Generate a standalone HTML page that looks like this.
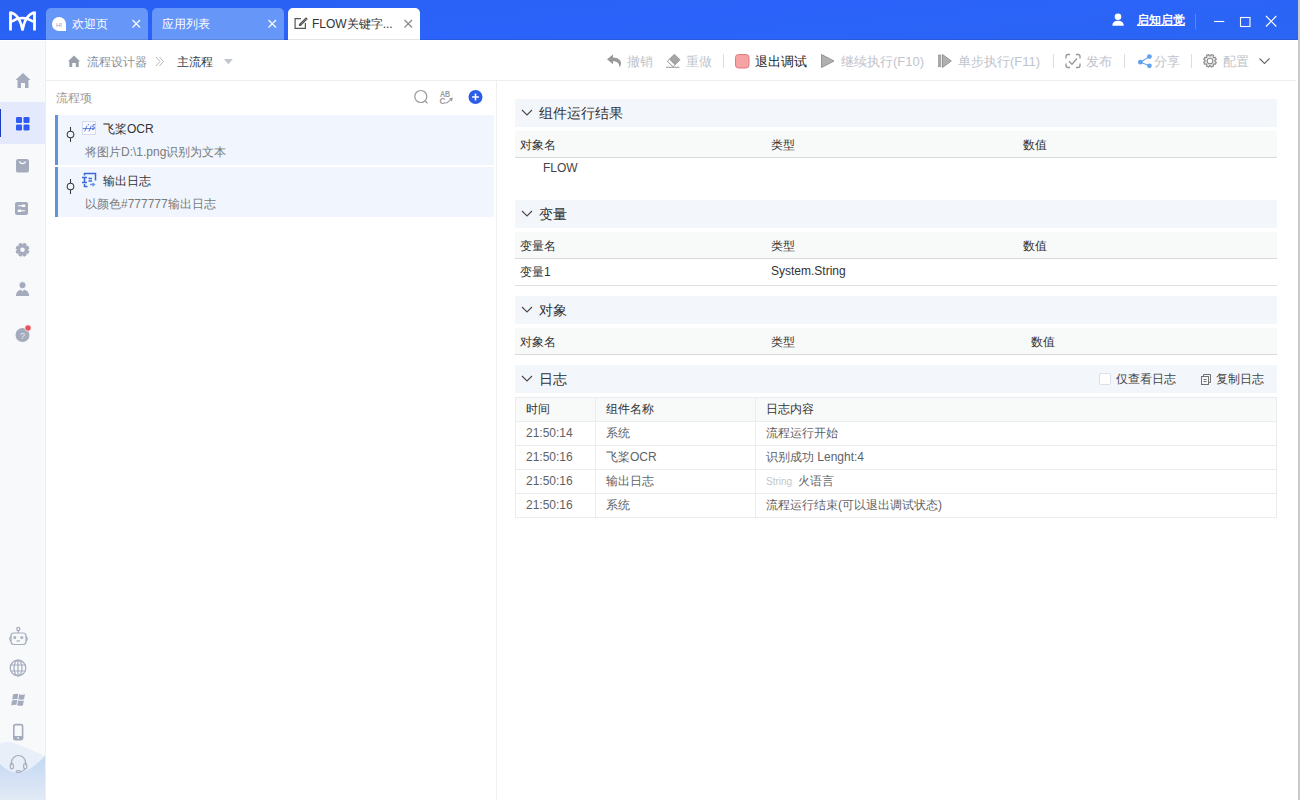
<!DOCTYPE html>
<html><head><meta charset="utf-8">
<style>
*{box-sizing:border-box;margin:0;padding:0}
html,body{width:1300px;height:800px;overflow:hidden;background:#fff;font-family:"Liberation Sans",sans-serif;font-size:12px;color:#333}
.a{position:absolute}
.t{position:absolute;white-space:nowrap;line-height:1}
#hdr{left:0;top:0;width:1298px;height:40px;background:linear-gradient(175deg,#2960f2 0%,#2b63fa 50%,#2a65f3 100%)}
#hdrb{left:0;top:39px;width:1298px;height:1px;background:rgba(30,30,30,0.12)}
.tab{position:absolute;top:8px;height:32px;border-radius:5px 5px 0 0;background:#6596f8}
.tab.act{background:#fff}
#side{left:0;top:41px;width:46px;height:759px;background:#f8f9fb;border-right:1px solid #edefee}
#rb{left:1298px;top:0;width:2px;height:800px;background:#c7cacd}
#rb2{display:none}
#tb{left:46px;top:80px;width:1250px;height:1px;background:#eeeeee}
#div{left:496px;top:81px;width:1px;height:719px;background:#efefef}
.item{position:absolute;left:55px;width:439px;height:50px;background:#f1f6fe;border-left:3px solid #5f93d9}
.sec{position:absolute;left:515px;width:762px;height:28px;background:#f3f6fa}
.th{position:absolute;left:515px;width:762px;height:27px;background:#f8f9f9;border-bottom:1px solid #d8d9db}
.hl{position:absolute;height:1px;background:#eaecf0}
.vl{position:absolute;width:1px;background:#eaecf0}
.tbt{font-size:13px;color:#c0c4cc;top:55px}
.lr{color:#5f6368}
</style></head><body>
<div id="hdr" class="a"></div>
<!-- tabs -->
<div class="tab" style="left:46px;width:102px"></div>
<div class="tab" style="left:152px;width:132px"></div>
<div class="tab act" style="left:288px;width:132px"></div>
<div class="t" style="left:72px;top:18px;color:#fff">欢迎页</div>
<div class="t" style="left:162px;top:18px;color:#fff">应用列表</div>
<div class="t" style="left:312px;top:18px;color:#333">FLOW关键字...</div>
<div class="t" style="left:1137px;top:14px;color:#fff;font-weight:bold;text-decoration:underline;text-underline-offset:1px">启知启觉</div>

<div id="side" class="a"></div>
<div id="hdrb" class="a"></div>
<div id="tb" class="a"></div>
<div id="rb" class="a"></div>
<div id="rb2" class="a"></div>
<div id="div" class="a"></div>
<div class="a" style="left:0;top:102px;width:45px;height:42px;background:#e4eafb"></div>
<div class="a" style="left:0;top:109px;width:1px;height:28px;background:#1d3fbf"></div>

<!-- breadcrumb -->
<div class="t" style="left:87px;top:56px;color:#8a8f99">流程设计器</div>
<div class="t" style="left:177px;top:56px;color:#3a3d44">主流程</div>

<!-- toolbar -->
<div class="t tbt" style="left:627px">撤销</div>
<div class="t tbt" style="left:686px">重做</div>
<div class="t tbt" style="left:755px;color:#1f1f1f">退出调试</div>
<div class="t tbt" style="left:841px">继续执行(F10)</div>
<div class="t tbt" style="left:958px">单步执行(F11)</div>
<div class="t tbt" style="left:1086px">发布</div>
<div class="t tbt" style="left:1154px">分享</div>
<div class="t tbt" style="left:1223px">配置</div>

<!-- left panel -->
<div class="t" style="left:56px;top:92px;color:#9a9a9a">流程项</div>
<div class="item" style="top:115px"></div>
<div class="item" style="top:167px"></div>
<div class="t" style="left:103px;top:123px;color:#333">飞桨OCR</div>
<div class="t" style="left:85px;top:146px;color:#7a7a7a">将图片D:\1.png识别为文本</div>
<div class="t" style="left:103px;top:175px;color:#333">输出日志</div>
<div class="t" style="left:85px;top:198px;color:#7a7a7a">以颜色#777777输出日志</div>

<!-- right sections -->
<div class="sec" style="top:99px"></div>
<div class="t" style="left:539px;top:106px;font-size:14px">组件运行结果</div>
<div class="th" style="top:131px"></div>
<div class="t" style="left:520px;top:139px">对象名</div>
<div class="t" style="left:771px;top:139px">类型</div>
<div class="t" style="left:1023px;top:139px">数值</div>
<div class="t" style="left:543px;top:162px;color:#444">FLOW</div>

<div class="sec" style="top:200px"></div>
<div class="t" style="left:539px;top:207px;font-size:14px">变量</div>
<div class="th" style="top:232px"></div>
<div class="t" style="left:520px;top:240px">变量名</div>
<div class="t" style="left:771px;top:240px">类型</div>
<div class="t" style="left:1023px;top:240px">数值</div>
<div class="a" style="left:515px;top:285px;width:762px;height:1px;background:#dedfe1"></div>
<div class="t" style="left:520px;top:266px">变量1</div>
<div class="t" style="left:771px;top:265px">System.String</div>

<div class="sec" style="top:296px"></div>
<div class="t" style="left:539px;top:303px;font-size:14px">对象</div>
<div class="th" style="top:328px"></div>
<div class="t" style="left:520px;top:336px">对象名</div>
<div class="t" style="left:771px;top:336px">类型</div>
<div class="t" style="left:1031px;top:336px">数值</div>

<div class="sec" style="top:365px"></div>
<div class="t" style="left:539px;top:372px;font-size:14px">日志</div>
<div class="t" style="left:1116px;top:373px;color:#444">仅查看日志</div>
<div class="t" style="left:1216px;top:373px;color:#444">复制日志</div>
<div class="a" style="left:1099px;top:373px;width:12px;height:12px;border:1px solid #dcdfe6;border-radius:2px;background:#fff"></div>

<!-- log table -->
<div class="a" style="left:515px;top:397px;width:762px;height:121px;border:1px solid #eaecf0;background:#fff"></div>
<div class="a" style="left:516px;top:398px;width:760px;height:23px;background:#f8f9f9"></div>
<div class="hl" style="left:515px;top:421px;width:762px"></div>
<div class="hl" style="left:515px;top:445px;width:762px"></div>
<div class="hl" style="left:515px;top:469px;width:762px"></div>
<div class="hl" style="left:515px;top:493px;width:762px"></div>
<div class="vl" style="left:595px;top:397px;height:121px"></div>
<div class="vl" style="left:755px;top:397px;height:121px"></div>
<div class="t" style="left:526px;top:403px">时间</div>
<div class="t" style="left:606px;top:403px">组件名称</div>
<div class="t" style="left:766px;top:403px">日志内容</div>
<div class="t lr" style="left:526px;top:427px">21:50:14</div>
<div class="t lr" style="left:606px;top:427px">系统</div>
<div class="t lr" style="left:766px;top:427px">流程运行开始</div>
<div class="t lr" style="left:526px;top:451px">21:50:16</div>
<div class="t lr" style="left:606px;top:451px">飞桨OCR</div>
<div class="t lr" style="left:766px;top:451px">识别成功 Lenght:4</div>
<div class="t lr" style="left:526px;top:475px">21:50:16</div>
<div class="t lr" style="left:606px;top:475px">输出日志</div>
<div class="t" style="left:766px;top:477px;color:#c6c6c6;font-size:10px">String</div>
<div class="t lr" style="left:798px;top:475px">火语言</div>
<div class="t lr" style="left:526px;top:499px">21:50:16</div>
<div class="t lr" style="left:606px;top:499px">系统</div>
<div class="t lr" style="left:766px;top:499px">流程运行结束(可以退出调试状态)</div>

<!-- ICON OVERLAY -->
<svg class="a" style="left:0;top:0" width="1300" height="800" viewBox="0 0 1300 800">
<!-- logo -->
<g fill="none" stroke="#fff" stroke-width="3">
<path d="M10.5 11.5 V30.5 M34.5 11.5 V30.5" stroke-width="2.8"/>
<path d="M11 12.5 Q20 15 22.5 30.5 Q25 15 34 12.5" stroke-width="2.4"/>
<path d="M11.5 21.8 Q22 14.2 33.5 21.8" stroke-width="2.3"/>
</g>
<!-- HI bubble -->
<path d="M59 17 A7 7 0 1 0 59 31 H66 V24 A7 7 0 0 0 59 17 Z" fill="#fff"/>
<text x="59" y="26.5" font-size="6" fill="#8aa0d0" text-anchor="middle" font-family="Liberation Sans">HI</text>
<!-- tab closes -->
<g stroke="#fff" stroke-width="1.2" fill="none">
<path d="M132.5 20 L140 27.5 M140 20 L132.5 27.5"/>
<path d="M268.5 20 L276 27.5 M276 20 L268.5 27.5"/>
</g>
<path d="M404.5 20 L412 27.5 M412 20 L404.5 27.5" stroke="#888" stroke-width="1.2" fill="none"/>
<!-- edit icon -->
<g stroke="#555" stroke-width="1.2" fill="none">
<path d="M301 18.6 H295.1 V28.4 H305.4 V23"/>
<path d="M299.5 24.5 L306 18 L307 19 L300.5 25.5 H299.5 Z"/>
</g>
<!-- user -->
<circle cx="1118" cy="16.8" r="3.3" fill="#fff"/>
<path d="M1112.3 25.8 Q1112.5 20.8 1118 20.8 Q1123.5 20.8 1123.8 25.8 Z" fill="#fff"/>
<rect x="1195" y="14" width="1" height="15.5" fill="#5e86f3"/>
<!-- window controls -->
<g stroke="#fff" stroke-width="1.1" fill="none">
<path d="M1214 21.5 H1224.3"/>
<rect x="1240.5" y="17.5" width="9.5" height="9"/>
<path d="M1266 16 L1276.3 26.5 M1276.3 16 L1266 26.5"/>
</g>

<!-- sidebar icons -->
<g fill="#a3abbd">
<path d="M23 73 L30.5 80 H28.5 V88 H25 V83 H21 V88 H17.5 V80 H15.5 Z"/>
<rect x="16" y="159" width="13" height="13.6" rx="2.2"/>
<rect x="15" y="202" width="13" height="13" rx="2"/>
<path d="M22.89 244.82 L23.82 243.33 L26.14 244.30 L25.75 246.00 L26.30 246.55 L28.00 246.16 L28.97 248.48 L27.48 249.41 L27.48 250.19 L28.97 251.12 L28.00 253.44 L26.30 253.05 L25.75 253.60 L26.14 255.30 L23.82 256.27 L22.89 254.78 L22.11 254.78 L21.18 256.27 L18.86 255.30 L19.25 253.60 L18.70 253.05 L17.00 253.44 L16.03 251.12 L17.52 250.19 L17.52 249.41 L16.03 248.48 L17.00 246.16 L18.70 246.55 L19.25 246.00 L18.86 244.30 L21.18 243.33 L22.11 244.82Z" stroke="#a3abbd" stroke-width="1" stroke-linejoin="round"/>
<path d="M15.8 296 Q16.3 289.5 22.5 289.5 Q28.7 289.5 29.2 296 Z"/>
<circle cx="22.5" cy="285.2" r="3.6" stroke="#f8f9fb" stroke-width="1"/><path d="M20.6 289.3 L22.5 291.6 L24.4 289.3 Z" fill="#f8f9fb"/>
<circle cx="22.5" cy="335" r="7"/>
</g>
<g fill="#2f5bf0">
<rect x="16" y="117" width="6" height="6" rx="1.3"/>
<rect x="23.5" y="117" width="6" height="6" rx="1.3"/>
<rect x="16" y="124.5" width="6" height="6" rx="1.3"/>
<rect x="23.5" y="124.5" width="6" height="6" rx="1.3"/>
</g>
<path d="M19.2 161.6 Q22.5 165.6 25.8 161.6" stroke="#fff" stroke-width="1.1" fill="none"/>
<g fill="#fff"><rect x="18" y="205.3" width="7" height="1"/><rect x="21.8" y="204.6" width="3.4" height="2.4"/><rect x="18" y="210.3" width="7" height="1"/><rect x="17.8" y="209.6" width="3.4" height="2.4"/></g>
<circle cx="22.5" cy="249.8" r="2.3" fill="#f7f8fa"/>
<path d="M22.4 283.5 v2" stroke="none"/>
<text x="22.5" y="338.5" font-size="9" fill="#e8ecf4" text-anchor="middle" font-family="Liberation Sans">?</text>
<circle cx="28" cy="328" r="3.2" fill="#e9505a" stroke="#f7f8fa" stroke-width="0.8"/>

<!-- bottom wave -->
<path d="M0 743.5 Q8 740 20 745 Q35 752 45 756 V800 H0 Z" fill="#e9eff8"/>
<defs><linearGradient id="wg" x1="0" y1="0" x2="0" y2="1"><stop offset="0" stop-color="#c3d8f3"/><stop offset="1" stop-color="#e2eaf6"/></linearGradient></defs>
<path d="M0 764 Q9 773 18 773 Q30 772 45 756 V800 H0 Z" fill="url(#wg)"/>

<g fill="none" stroke="#a3abbd" stroke-width="1.2">
<!-- robot -->
<rect x="11" y="633" width="15" height="11.5" rx="3"/>
<circle cx="18.3" cy="629" r="1.6"/>
<path d="M18.3 630.6 V633"/>
<path d="M11 636.5 Q8.5 638.5 11 641 M26 636.5 Q28.5 638.5 26 641"/>
<circle cx="14.8" cy="637.5" r="1"/><circle cx="21.8" cy="637.5" r="1"/>
<path d="M16.5 641 H20"/>
<!-- globe -->
<circle cx="18" cy="668" r="7.8"/>
<ellipse cx="18" cy="668" rx="4" ry="7.8"/>
<path d="M18 660.2 V675.8 M10.5 665 H25.5 M10.5 671 H25.5"/>
<!-- phone -->
<rect x="13.8" y="724.6" width="8.8" height="15" rx="1.8" stroke-width="1.6"/>
<!-- headset -->
<path d="M11.5 765 V762.5 A7 7 0 0 1 25.5 762.5 V765"/>
<rect x="10.3" y="763.5" width="3" height="5.5" rx="1.4"/>
<rect x="23.7" y="763.5" width="3" height="5.5" rx="1.4"/>
<path d="M25 769 Q24 771 21 771.5"/>
<ellipse cx="18.3" cy="771.5" rx="2.3" ry="1" />
</g>
<rect x="13.8" y="736" width="8.8" height="3.6" fill="#a3abbd"/><circle cx="18.2" cy="737.9" r="0.9" fill="#f3f5f9"/>
<!-- windows -->
<g fill="#a3abbd">
<path d="M13 694.5 Q15.5 693.3 18.3 694 L17.4 699 Q14.8 698.6 12.2 699.5 Z"/>
<path d="M19.2 694.2 Q22 695.2 25 694.2 L24 699.3 Q21.2 700.2 18.3 699.3 Z"/>
<path d="M12 700.5 Q14.6 699.7 17.2 700.1 L16.3 705 Q13.6 704.5 11.2 705.5 Z"/>
<path d="M18.1 700.3 Q21 701.3 23.8 700.4 L22.9 705.5 Q20 706.3 17.2 705.3 Z"/>
</g>

<!-- breadcrumb -->
<path d="M74 55.5 L80 61.2 H78.7 V67 H75.8 V63 H72.2 V67 H69.3 V61.2 H68 Z" fill="#9aa0aa"/>
<path d="M156 57 L160 61.5 L156 66 M159.5 57 L163.5 61.5 L159.5 66" stroke="#b0b0b0" stroke-width="0.9" fill="none"/>
<path d="M224 59 H232.8 L228.4 64.2 Z" fill="#c0c4cc"/>

<!-- toolbar icons -->
<path d="M607 59.3 L613 54.5 V57.5 C618.5 57.5 621.5 60.5 621 64 C620.6 65.8 620 66.8 619.3 67.3 C619.6 63.8 617.5 61.3 613 61.3 V64.2 Z" fill="#999"/>
<path d="M674.4 54.2 L680 59.8 L675.1 64.7 L669.5 59.1 Z" fill="#a6a6a6" stroke="#8f8f8f" stroke-width="0.8" stroke-linejoin="round"/>
<path d="M669.5 59.1 L675.1 64.7 L673 66.8 L667.4 61.2 Z" fill="#fff" stroke="#8f8f8f" stroke-width="1" stroke-linejoin="round"/>
<path d="M666 67.3 H679.5" stroke="#999" stroke-width="1"/>
<rect x="723" y="54" width="1" height="14" fill="#ddd"/>
<rect x="735.5" y="54.5" width="13.5" height="13.5" rx="3" fill="#f5a3a5" stroke="#e57a7e" stroke-width="1"/>
<path d="M821.5 54.5 V67.5 L834 61 Z" fill="#b0b0b0" stroke="#959595" stroke-width="1" stroke-linejoin="round"/>
<rect x="938.3" y="55" width="2.6" height="11.8" fill="#aaa" stroke="#959595" stroke-width="0.6"/>
<path d="M942.5 54.5 V67.5 L951.3 61 Z" fill="#b0b0b0" stroke="#959595" stroke-width="1" stroke-linejoin="round"/>
<rect x="1053" y="54" width="1" height="14" fill="#ddd"/>
<g stroke="#999" stroke-width="1.35" fill="none">
<path d="M1066 58.5 V56.5 Q1066 54.5 1068 54.5 H1070"/>
<path d="M1076 54.5 H1078 Q1080 54.5 1080 56.5 V58.5"/>
<path d="M1066 63.5 V65.5 Q1066 67.5 1068 67.5 H1070"/>
<path d="M1076 67.5 H1078 Q1080 67.5 1080 65.5 V63.5"/>
<path d="M1069 61.3 L1072 64.2 L1077 58.5"/>
</g>
<rect x="1124" y="54" width="1" height="14" fill="#ddd"/>
<g fill="#62a0f1">
<circle cx="1149.4" cy="56.6" r="2.4"/>
<circle cx="1140.4" cy="62.2" r="2.4"/>
<circle cx="1149.4" cy="65.8" r="2.4"/>
</g>
<path d="M1149.4 56.6 L1140.4 62.2 L1149.4 65.8" stroke="#62a0f1" stroke-width="1.1" fill="none"/>
<rect x="1191" y="54" width="1" height="14" fill="#ddd"/>
<path d="M1210.47 55.92 L1211.39 54.55 L1213.44 55.40 L1213.12 57.02 L1213.78 57.68 L1215.40 57.36 L1216.25 59.41 L1214.88 60.33 L1214.88 61.27 L1216.25 62.19 L1215.40 64.24 L1213.78 63.92 L1213.12 64.58 L1213.44 66.20 L1211.39 67.05 L1210.47 65.68 L1209.53 65.68 L1208.61 67.05 L1206.56 66.20 L1206.88 64.58 L1206.22 63.92 L1204.60 64.24 L1203.75 62.19 L1205.12 61.27 L1205.12 60.33 L1203.75 59.41 L1204.60 57.36 L1206.22 57.68 L1206.88 57.02 L1206.56 55.40 L1208.61 54.55 L1209.53 55.92Z" fill="#efefef" stroke="#8c8c8c" stroke-width="1.2" stroke-linejoin="round"/>
<circle cx="1210" cy="61" r="2.8" fill="#fff" stroke="#8c8c8c" stroke-width="1.1"/>
<path d="M1259.5 58.5 L1264.5 63.5 L1269.5 58.5" stroke="#666" stroke-width="1.1" fill="none"/>

<!-- left panel header icons -->
<g stroke="#999" stroke-width="1.2" fill="none">
<circle cx="420.8" cy="96.5" r="6"/>
<path d="M425.2 101 L427.5 103.3"/>
</g>
<g transform="translate(440 97) scale(0.82 1)"><text x="0" y="0" font-size="8.6" fill="#999" font-family="Liberation Sans" font-weight="bold">AB</text></g>
<text x="439.6" y="104.2" font-size="8.4" fill="#999" font-family="Liberation Sans" font-weight="bold">C</text>
<path d="M445.5 103.3 Q447.5 102.5 450.5 99.8" stroke="#999" stroke-width="1.1" fill="none"/>
<path d="M449 98.5 L453 97.6 L451.8 101.5 Z" fill="#999"/>
<circle cx="475.5" cy="97" r="7" fill="#2d5ce8"/>
<path d="M475.5 93.6 V100.4 M472.1 97 H478.9" stroke="#fff" stroke-width="1.6"/>

<!-- node icons -->
<g stroke="#3a3a3a" stroke-width="1.05" fill="none">
<path d="M70.5 127 V131 M70.5 138 V142"/>
<circle cx="70.5" cy="134.5" r="3.3"/>
<path d="M70.5 179 V183 M70.5 190 V194"/>
<circle cx="70.5" cy="186.5" r="3.3"/>
</g>
<!-- paddle icon -->
<rect x="82.5" y="121.5" width="13" height="13" fill="#f8faff" stroke="#d5dbea" stroke-width="1"/>
<path d="M82.8 128.6 H94.2 M86.9 125.8 Q85.8 129 84.6 131.4 M91.2 125.8 Q90.2 129 89 131.4 M95.2 124.6 H93.2 L92.7 126.9 Q95.2 126.6 94.6 128.4 Q94.2 129.6 92.2 129.6 M87.8 124.7 H89.2" stroke="#4a70d8" stroke-width="0.9" fill="none"/>
<!-- log icon -->
<g stroke="#3a68d8" stroke-width="1.5" fill="none">
<path d="M84.5 175.5 V173.5 H95.5 V180.5"/>
<path d="M84.5 184 V186.5 H87.5"/>
<path d="M82 177.5 H87 M82 182.5 H87 M84.5 177.5 V182.5"/>
<path d="M88.5 178.5 H92 M88.5 181 H92"/>
</g>
<path d="M90 184.5 H94 M92.5 183 L94.5 184.5 L92.5 186" stroke="#6b95e8" stroke-width="1.3" fill="none"/>

<!-- section chevrons -->
<g stroke="#4a4a4a" stroke-width="1.15" fill="none">
<path d="M522 110 L527 115 L532 110"/>
<path d="M522 211 L527 216 L532 211"/>
<path d="M522 307 L527 312 L532 307"/>
<path d="M522 376 L527 381 L532 376"/>
</g>
<!-- copy icon -->
<g stroke="#6a6a6a" stroke-width="0.95" fill="none">
<rect x="1201.5" y="376.5" width="7" height="8"/>
<path d="M1203.5 376.5 V374.5 H1210.5 V382.5 H1208.5"/>
<path d="M1203.5 379.5 H1206.5 M1203.5 381.5 H1206.5"/>
</g>
</svg>
</body></html>
